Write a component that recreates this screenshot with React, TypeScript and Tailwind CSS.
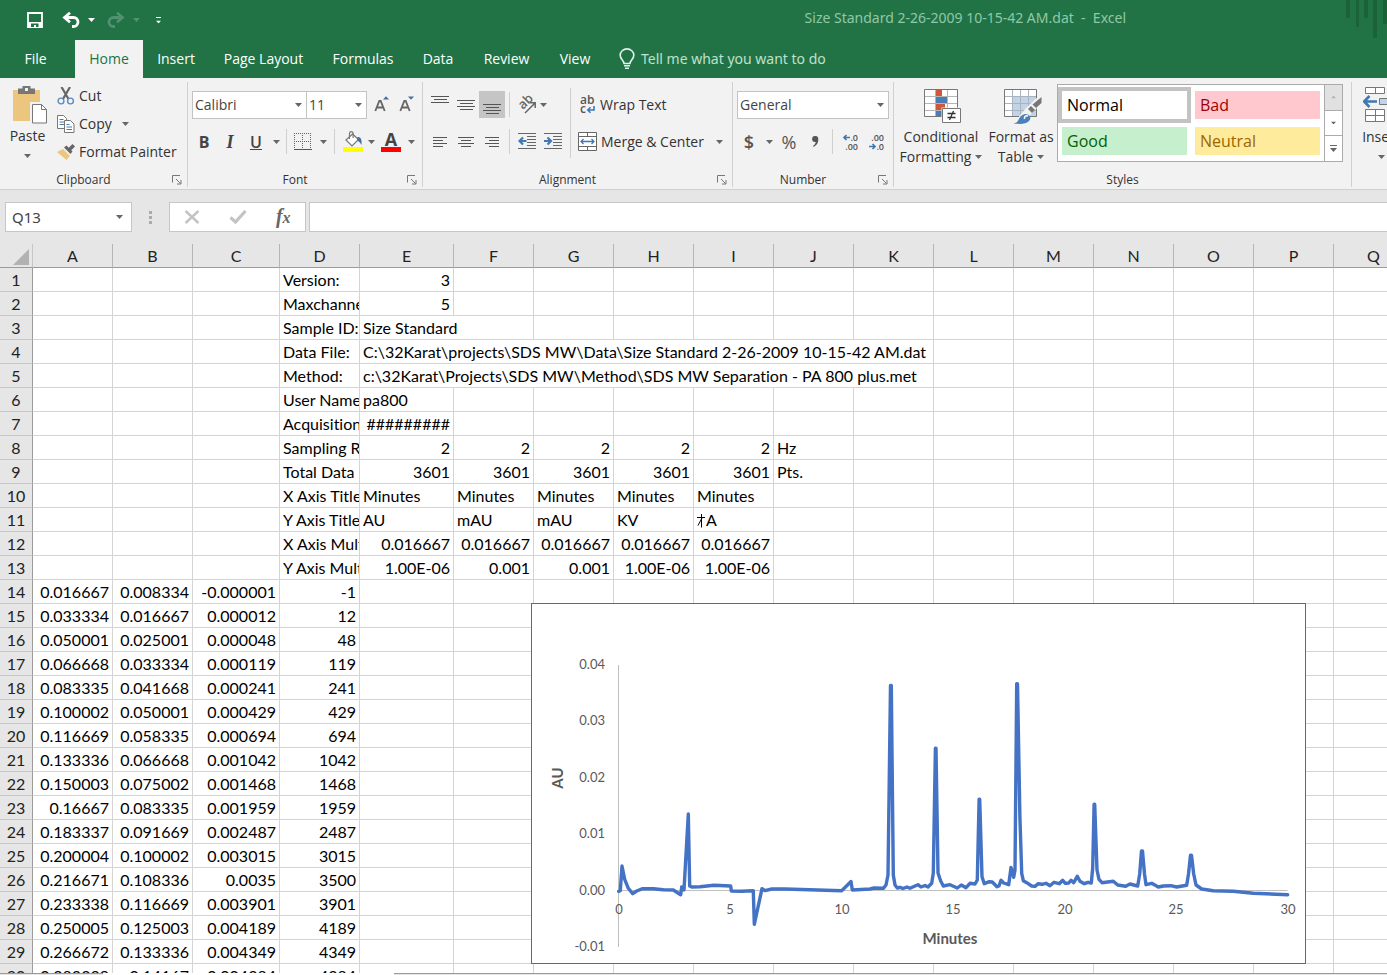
import React from "react";

type IconProps = { className?: string };

const Caret = ({ className = "text-[#666]" }: IconProps) => (
  <svg width="7" height="4" viewBox="0 0 7 4" className={`shrink-0 ${className}`} aria-hidden="true">
    <path d="M0 0h7L3.5 4z" fill="currentColor" />
  </svg>
);

const SaveIcon = () => (
  <svg width="16" height="16" viewBox="0 0 16 16" aria-hidden="true">
    <path d="M1 1h14v14H1z" fill="none" stroke="#fff" strokeWidth="1.8" />
    <path d="M1 10h14v5H1z" fill="#fff" />
    <path d="M4 11.500h7.500V15H9v-2H7v2H4z" fill="#217346" />
  </svg>
);

const ArrowBack = ({ className = "" }: IconProps) => (
  <svg width="19" height="16" viewBox="0 0 19 16" className={className} aria-hidden="true">
    <path d="M3 5.500h8.500a4.500 4.500 0 0 1 0 9H10" fill="none" stroke="currentColor" strokeWidth="2.800" />
    <path d="M8 .8 2.500 5.500l5.500 4.700" fill="none" stroke="currentColor" strokeWidth="2.800" />
  </svg>
);

const BulbIcon = () => (
  <svg width="16" height="22" viewBox="0 0 16 22" fill="none" stroke="#e3f1e8" strokeWidth="1.600" aria-hidden="true">
    <path d="M5 15.500c0-3-3.800-4.200-3.800-8.300a6.800 6.300 0 0 1 13.600 0c0 4.100-3.800 5.300-3.800 8.300z" />
    <path d="M5 17.800h6M6 20.300h4" />
  </svg>
);

const PasteIcon = () => (
  <svg width="36" height="40" viewBox="0 0 36 40" aria-hidden="true">
    <path d="M1 4h27v31H1z" fill="#ecc57e" />
    <path d="M6 2.500h4.500V0h8v2.500H23V8H6z" fill="#777" />
    <path d="M13 2h3v3h-3z" fill="#f2f2f2" />
    <path d="M19.500 17.500h10l5 5.500v14.500h-15z" fill="#fff" stroke="#f2f2f2" strokeWidth="3" />
    <path d="M20.500 18.500h9l5 5v13.500h-14z" fill="#fff" stroke="#777" />
    <path d="M29.500 18.500v5h5" fill="none" stroke="#777" />
  </svg>
);

const CutIcon = () => (
  <svg width="18" height="18" viewBox="0 0 18 18" fill="none" aria-hidden="true">
    <path d="M4.500 0 11.500 12M13 0 6 12" stroke="#666" strokeWidth="2.200" />
    <circle cx="4" cy="14" r="2.900" stroke="#5b8ac0" strokeWidth="1.400" />
    <circle cx="13.500" cy="14" r="2.900" stroke="#5b8ac0" strokeWidth="1.400" />
  </svg>
);

const CopyIcon = () => (
  <svg width="18" height="18" viewBox="0 0 18 18" fill="#fff" aria-hidden="true">
    <path d="M.5.500h6l3 3v10h-9z" stroke="#777" />
    <path d="M2.500 4.500h4M2.500 7h5M2.500 9.500h5" stroke="#4a7db5" />
    <path d="M7.500 5.500h6l3.500 3.500v8.500H7.500z" stroke="#777" />
    <path d="M9.500 9.500h3M9.500 12h5.500M9.500 14.500h5.500" stroke="#4a7db5" />
  </svg>
);

const PainterIcon = () => (
  <svg width="18" height="16" viewBox="0 0 18 16" aria-hidden="true">
    <path d="M0 8 6 5l7 7-3.500 4z" fill="#ecc57e" />
    <path d="M7 3.500 9.500 1.500l6 6-2 2.500z" fill="#666" />
    <path d="M11 4.500 15.500 0 18 2.500 13.500 7z" fill="#666" />
  </svg>
);

const Launcher = () => (
  <svg width="10" height="10" viewBox="0 0 10 10" fill="none" stroke="#777" aria-hidden="true">
    <path d="M.5 7.500V.5h7.500M4 4l4.500 4.500M9 5v4H5" />
  </svg>
);

const GrowFont = ({ down = false }: { down?: boolean }) => (
  <svg width="16" height="18" viewBox="0 0 16 18" aria-hidden="true">
    <path d="M1.300 15 5.300 5h1.400l4 10M2.800 11.500h6.500" fill="none" stroke="#666" strokeWidth="1.800" />
    {down ? <path d="M9 0.500h6l-3 3.200z" fill="#41719c" /> : <path d="M9 3.500h6L12 .3z" fill="#41719c" />}
  </svg>
);

const BordersIcon = () => (
  <svg width="18" height="18" viewBox="0 0 18 18" fill="none" stroke="#666" shapeRendering="crispEdges" aria-hidden="true">
    <path d="M0 .5h18M0 8.500h18M.5 0v17M8.500 0v17M16.500 0v17" strokeDasharray="1 1" />
    <path d="M0 16.500h18" stroke="#555" />
  </svg>
);

const FillIcon = () => (
  <svg width="20" height="21" viewBox="0 0 20 21" aria-hidden="true">
    <path d="M9.500 3 15.500 8.500 9 15 3 9z" fill="#fff" stroke="#777" strokeWidth="1.200" />
    <path d="M6.500 8V2.500a1.800 1.800 0 0 1 3.600 0V7" fill="none" stroke="#777" strokeWidth="1.200" />
    <path d="M14.500 6c3.500 0 4.500 2.500 4 8-1.200-2-2.500-3.500-4.500-5z" fill="#41719c" />
    <path d="M0 16h20v5H0z" fill="#ff0" />
  </svg>
);

const Lines = ({ rows }: { rows: [number, number, number][] }) => (
  <svg width="18" height="22" viewBox="0 0 18 22" aria-hidden="true">
    {rows.map(([x, y, w]) => (
      <rect key={y} x={x} y={y} width={w} height="1" fill="#555" />
    ))}
  </svg>
);

const IndentIcon = ({ right = false }: { right?: boolean }) => (
  <svg width="18" height="17" viewBox="0 0 18 17" aria-hidden="true">
    <path d="M0 .5h18M9 3.500h9M9 6.500h9M9 9.500h9M9 12.500h9M0 15.500h18" stroke="#666" />
    {right ? (
      <path d="M0 8h7M3.500 4.500 7 8l-3.500 3.500" fill="none" stroke="#3f78b5" strokeWidth="2.200" />
    ) : (
      <path d="M1.500 8h7M5 4.500 1.500 8 5 11.500" fill="none" stroke="#3f78b5" strokeWidth="2.200" />
    )}
  </svg>
);

const OrientationIcon = () => (
  <svg width="20" height="18" viewBox="0 0 20 18" className="overflow-visible" aria-hidden="true">
    <text fontSize="13" fontWeight="600" fill="#666" transform="translate(6 14) rotate(-45)" className="font-['Open_Sans',sans-serif]">
      ab
    </text>
    <path d="M8 17 18 7M13 6.800h5.200V12" fill="none" stroke="#666" strokeWidth="1.500" />
  </svg>
);

const WrapIcon = () => (
  <svg width="18" height="20" viewBox="0 0 18 20" aria-hidden="true">
    <text x="2" y="9" fontSize="12" fontWeight="600" fill="#555" className="font-['Open_Sans',sans-serif]">ab</text>
    <text x="2" y="18" fontSize="12" fontWeight="600" fill="#555" className="font-['Open_Sans',sans-serif]">c</text>
    <path d="M16 11v4h-6M12.500 12.300 9.800 15l2.700 2.700" fill="none" stroke="#3f78b5" strokeWidth="1.600" />
  </svg>
);

const MergeIcon = () => (
  <svg width="19" height="19" viewBox="0 0 19 19" fill="none" aria-hidden="true">
    <path d="M.5.500h18v18H.5z" fill="#fff" stroke="#666" />
    <path d="M.5 4.500h18M.5 14.500h18M9.500.500v4M9.500 14.500v4" stroke="#666" />
    <path d="M3 9.500h13M5.500 7 3 9.500 5.500 12M13.500 7 16 9.500 13.500 12" stroke="#3f78b5" strokeWidth="1.300" />
  </svg>
);

const DecimalIcon = ({ decrease = false }: { decrease?: boolean }) => (
  <svg width="18" height="18" viewBox="0 0 18 18" aria-hidden="true" className="font-['Open_Sans',sans-serif]">
    <g fontSize="9" fontWeight="600" fill="#555" textAnchor="end">
      <text x="16" y="8">{decrease ? ".00" : ".0"}</text>
      <text x="16" y="17">{decrease ? ".0" : ".00"}</text>
    </g>
    {decrease ? (
      <path d="M1 13.500h6M4.500 11 7 13.500 4.500 16" fill="none" stroke="#3f78b5" strokeWidth="1.700" />
    ) : (
      <path d="M2 4.500h6M4.500 2 2 4.500 4.500 7" fill="none" stroke="#3f78b5" strokeWidth="1.700" />
    )}
  </svg>
);

const ConditionalIcon = () => (
  <svg width="38" height="36" viewBox="0 0 38 36" className="ml-1" aria-hidden="true">
    <path d="M1 1h33v27H1z" fill="#fff" />
    <path d="M12 1h6v7h-6zM12 15h9v6h-9z" fill="#d0573a" />
    <path d="M12 8h11v7H12zM12 21h6v7h-6z" fill="#4a7db5" />
    <path d="M1 7.500h33M1 14.500h33M1 21.500h33M11.500 1v27M23.500 1v27" stroke="#b5b5b5" fill="none" />
    <path d="M.5.500h33v27h-33z" fill="none" stroke="#777" />
    <path d="M17.500 18.500h20V36h-20z" fill="#f2f2f2" />
    <path d="M18.500 19.500h18v14h-18z" fill="#fff" stroke="#777" />
    <path d="M23.500 24.500h8M23.500 28.500h8M29.500 22 25.500 31" stroke="#333" fill="none" strokeWidth="1.300" />
  </svg>
);

const FormatTableIcon = () => (
  <svg width="38" height="36" viewBox="0 0 38 36" className="ml-1" aria-hidden="true">
    <path d="M1 1h32v27H1z" fill="#fff" />
    <path d="M9 8h24v20H9z" fill="#c2d3e8" />
    <path d="M1 7.500h32M1 14.500h32M1 21.500h32M8.500 1v27M16.500 1v27M24.500 1v27" stroke="#a9b4c0" fill="none" />
    <path d="M.5.500h32v27H.5z" fill="none" stroke="#777" />
    <path d="M22 19 36 6h2v8L26 26 17 36H8z" fill="#f2f2f2" />
    <path d="M37.500 8v6l-5.500 5-3.500-3.500z" fill="#777" />
    <path d="m27 17 4 4-3 3-4-4z" fill="#777" />
    <path d="M9.500 34.500c5-1 4.500-4 7-7 3-3.500 7.500-3.500 9.500 0 1 2.500-.5 5-4 6.500-4 1.200-8 1-12.500.500z" fill="#4a80bb" />
    <path d="M20.500 30c-.5-2.500 1-3.500 3.500-3" fill="none" stroke="#fff" strokeWidth="1.500" />
  </svg>
);

const InsertCellsIcon = () => (
  <svg width="36" height="36" viewBox="0 0 36 36" fill="#fff" aria-hidden="true">
    <path d="M2.500.500h19v6h-19zM12.500.500v6M2.500 22.500h19v12h-19zM12.500 22.500v12M2.500 28.500h19" stroke="#777" />
    <path d="M16.500 11.500h19v6h-19z" fill="#c2d3e8" stroke="#777" />
    <path d="M1.500 14.500H14M6.500 9 1 14.500 6.500 20" fill="none" stroke="#3f78b5" strokeWidth="2.600" />
  </svg>
);

const Divider = ({ className = "h-[25px]" }: IconProps) => <span className={`w-px shrink-0 bg-[#d0d0d0] ${className}`} />;

const ToolButton = ({ label, className = "w-[26px]", children }: { label: string; className?: string; children: React.ReactNode }) => (
  <button type="button" aria-label={label} className={`flex h-[27px] shrink-0 items-center justify-center ${className}`}>
    {children}
  </button>
);

const Dropdown = ({ label, value, className }: { label: string; value: string; className: string }) => (
  <span className={`relative flex h-7 shrink-0 items-center border border-[#c3c3c3] bg-white ${className}`}>
    <select aria-label={label} defaultValue={value} className="h-full w-full appearance-none bg-transparent pl-[2px] text-sm text-[#444] outline-none">
      <option>{value}</option>
    </select>
    <span className="pointer-events-none absolute right-1">
      <Caret />
    </span>
  </span>
);

const Group = ({ name, launcher = true, className = "", children }: { name: string; launcher?: boolean; className?: string; children: React.ReactNode }) => (
  <section aria-label={name} className={`flex h-[105px] shrink-0 flex-col border-r border-[#d0d0d0] ${className}`}>
    <div className="flex-1">{children}</div>
    <div className="flex h-[14px] items-center text-xs leading-[14px] text-[#333]">
      <span className="flex-1 text-center">{name}</span>
      {launcher && (
        <button type="button" aria-label={`${name} settings`} className="mr-[5px] flex h-[14px] w-[15px] items-center justify-end">
          <Launcher />
        </button>
      )}
    </div>
  </section>
);

const tabs: [string, string][] = [
  ["File", "w-[71px] mr-1"],
  ["Home", "w-[68px] bg-[#f2f2f2] text-[#217346]"],
  ["Insert", "w-[66px]"],
  ["Page Layout", "w-[109px]"],
  ["Formulas", "w-[90px]"],
  ["Data", "w-[60px]"],
  ["Review", "w-[77px]"],
  ["View", "w-[60px]"],
];

const TitleBar = () => (
  <header className="shrink-0 bg-[#217346] text-white">
    <div className="relative flex h-10 items-center">
      <div className="flex h-9 items-center pl-[27px]">
        <button type="button" aria-label="Save"><SaveIcon /></button>
        <button type="button" aria-label="Undo" className="ml-[19px] flex items-center gap-[7px]">
          <ArrowBack />
          <Caret className="text-white" />
        </button>
        <button type="button" aria-label="Redo" className="ml-[11px] flex items-center gap-2 text-[#4f9170]">
          <ArrowBack className="-scale-x-100" />
          <Caret className="text-[#4f9170]" />
        </button>
        <button type="button" aria-label="Customize toolbar" className="ml-[15px] flex flex-col items-center gap-[2px]">
          <span className="h-px w-[5px] bg-white" />
          <Caret className="scale-75 text-white" />
        </button>
      </div>
      <h1 className="mr-[261px] mb-1 ml-auto font-['Noto_Sans',sans-serif] text-sm leading-8 whitespace-pre text-[#90c8a6]">Size Standard 2-26-2009 10-15-42 AM.dat  -  Excel</h1>
      <svg width="42" height="40" viewBox="0 0 42 40" fill="#1c6238" className="absolute top-0 right-0" aria-hidden="true">
        <path d="M1 0h4v18H1zM11 0h3v27h-3zM19 0h4v18h-4zM28 0h4v38h-4zM38 0h4v24h-4z" />
      </svg>
    </div>
    <nav className="flex h-[38px] text-sm">
      {tabs.map(([t, cls]) => (
        <button key={t} type="button" className={`shrink-0 ${cls}`}>{t}</button>
      ))}
      <button type="button" className="ml-[14px] flex items-center gap-[6px] font-['Noto_Sans',sans-serif] text-[#bfe0cc]">
        <BulbIcon />
        Tell me what you want to do
      </button>
    </nav>
  </header>
);

const styleCards: [string, string][] = [
  ["Normal", "border-4 border-[#c3c3c3] bg-white text-black"],
  ["Bad", "border-4 border-white bg-[#ffc7ce] bg-clip-padding text-[#9c0006]"],
  ["Good", "border-4 border-white bg-[#c6efce] bg-clip-padding text-[#006100]"],
  ["Neutral", "border-4 border-white bg-[#ffeb9c] bg-clip-padding text-[#9c6500]"],
];

const Ribbon = () => (
  <div className="flex h-28 shrink-0 overflow-hidden border-b border-[#d0d0d0] bg-[#f2f2f2] pt-1 text-sm text-[#333]">
    <Group name="Clipboard" className="w-[188px]">
      <div className="flex">
        <button type="button" className="flex w-[55px] flex-col items-center pt-1">
          <span className="pl-1"><PasteIcon /></span>
          <span className="leading-5">Paste</span>
          <span className="pt-2"><Caret /></span>
        </button>
        <div className="flex flex-col items-start pl-[2px]">
          <button type="button" className="flex h-7 items-center gap-1"><CutIcon />Cut</button>
          <button type="button" className="flex h-7 items-center gap-1"><CopyIcon />Copy<span className="pl-[6px]"><Caret /></span></button>
          <button type="button" className="flex h-7 items-center gap-1"><PainterIcon />Format Painter</button>
        </div>
      </div>
    </Group>

    <Group name="Font" className="w-[235px]">
      <div className="flex items-center pt-[9px] pl-1">
        <Dropdown label="Font name" value="Calibri" className="w-[115px]" />
        <Dropdown label="Font size" value="11" className="-ml-px w-[61px]" />
        <ToolButton label="Increase font size" className="ml-[3px] w-6"><GrowFont /></ToolButton>
        <ToolButton label="Decrease font size" className="w-[26px]"><GrowFont down /></ToolButton>
      </div>
      <div className="flex items-center pt-[9px] pl-1 text-base text-[#444]">
        <ToolButton label="Bold" className="w-6"><b>B</b></ToolButton>
        <ToolButton label="Italic" className="w-7"><span className="font-['Liberation_Serif',serif] text-lg font-bold italic">I</span></ToolButton>
        <ToolButton label="Underline" className="w-6"><span className="font-semibold underline">U</span></ToolButton>
        <ToolButton label="Underline options" className="w-4"><Caret /></ToolButton>
        <Divider className="mx-[2px] h-[25px]" />
        <ToolButton label="Borders" className="w-7"><BordersIcon /></ToolButton>
        <ToolButton label="Border options" className="w-3"><Caret /></ToolButton>
        <Divider className="mr-1 ml-[5px] h-[25px]" />
        <ToolButton label="Fill color" className="w-7"><FillIcon /></ToolButton>
        <ToolButton label="Fill options" className="w-2"><Caret /></ToolButton>
        <ToolButton label="Font color" className="w-8">
          <span className="flex h-[21px] w-5 items-center justify-center border-b-5 border-[#f00] text-lg leading-4 font-bold">A</span>
        </ToolButton>
        <ToolButton label="Font color options" className="w-2"><Caret /></ToolButton>
      </div>
    </Group>

    <Group name="Alignment" className="w-[310px]">
      <div className="flex">
        <div className="pl-1">
          <div className="flex items-center pt-[9px]">
            <ToolButton label="Top align"><Lines rows={[[0, 2, 18], [3, 5, 13], [0, 8, 18]]} /></ToolButton>
            <ToolButton label="Middle align"><Lines rows={[[0, 6, 18], [3, 9, 13], [0, 12, 18], [3, 15, 13]]} /></ToolButton>
            <ToolButton label="Bottom align" className="w-[26px] bg-[#c5c5c5]"><Lines rows={[[0, 10, 18], [3, 13, 13], [0, 16, 18], [3, 19, 13]]} /></ToolButton>
            <Divider className="mx-1 h-[25px]" />
            <ToolButton label="Orientation"><OrientationIcon /></ToolButton>
            <Caret />
          </div>
          <div className="flex items-center pt-[10px]">
            <ToolButton label="Align left"><Lines rows={[[2, 6, 14], [2, 9, 10], [2, 12, 14], [2, 15, 10]]} /></ToolButton>
            <ToolButton label="Center"><Lines rows={[[1, 6, 16], [4, 9, 10], [1, 12, 16], [4, 15, 10]]} /></ToolButton>
            <ToolButton label="Align right"><Lines rows={[[2, 6, 14], [6, 9, 10], [2, 12, 14], [6, 15, 10]]} /></ToolButton>
            <Divider className="mx-1 h-[25px]" />
            <ToolButton label="Decrease indent"><IndentIcon /></ToolButton>
            <ToolButton label="Increase indent"><IndentIcon right /></ToolButton>
          </div>
        </div>
        <Divider className="mt-[6px] ml-1 h-[70px]" />
        <div className="pl-[7px]">
          <button type="button" className="mt-[9px] flex h-[27px] items-center gap-1"><WrapIcon />Wrap Text</button>
          <button type="button" className="mt-[10px] flex h-[27px] items-center gap-1"><MergeIcon />Merge &amp; Center<span className="pl-2"><Caret /></span></button>
        </div>
      </div>
    </Group>

    <Group name="Number" className="w-[161px]">
      <div className="pt-[9px] pl-1"><Dropdown label="Number format" value="General" className="w-[152px]" /></div>
      <div className="flex items-center pt-[9px] pl-1 text-lg text-[#555]">
        <ToolButton label="Currency" className="w-6"><span className="font-semibold">$</span></ToolButton>
        <ToolButton label="Currency options" className="w-4"><Caret /></ToolButton>
        <ToolButton label="Percent" className="w-6">%</ToolButton>
        <ToolButton label="Comma style" className="w-7">
          <svg width="7" height="11" viewBox="0 0 7 11" aria-hidden="true"><path d="M3.200 0A3 3 0 0 0 3 6h.8C3.600 7.500 2.500 9 1 10l.5 1C5 9.500 6.500 6.500 6.300 3A3 3 0 0 0 3.200 0z" fill="#555" /></svg>
        </ToolButton>
        <Divider className="mr-[5px] ml-[3px] h-[25px]" />
        <ToolButton label="Increase decimal"><DecimalIcon /></ToolButton>
        <ToolButton label="Decrease decimal"><DecimalIcon decrease /></ToolButton>
      </div>
    </Group>

    <Group name="Styles" launcher={false} className="w-[458px]">
      <div className="flex">
        <button type="button" className="flex w-[94px] flex-col items-center pt-[7px] leading-5">
          <ConditionalIcon />
          <span className="pt-[2px]">Conditional</span>
          <span className="flex items-center gap-1">Formatting <Caret /></span>
        </button>
        <button type="button" className="flex w-[66px] flex-col items-center pt-[7px] leading-5 whitespace-nowrap">
          <FormatTableIcon />
          <span className="pt-[2px]">Format as</span>
          <span className="flex items-center gap-1">Table <Caret /></span>
        </button>
        <div className="mt-[2px] ml-[3px] flex h-[78px] border border-[#ababab] bg-white">
          <div className="grid grid-cols-2 content-center">
            {styleCards.map(([n, cls]) => (
              <button key={n} type="button" className={`h-9 w-[133px] pl-[5px] text-left text-base ${cls}`}>{n}</button>
            ))}
          </div>
          <div className="flex w-[18px] flex-col divide-y divide-[#ababab] border-l border-[#ababab]">
            <button type="button" aria-label="Scroll up" className="flex flex-1 items-center justify-center bg-[#e1e1e1]"><Caret className="scale-75 -scale-y-75 text-[#b5b5b5]" /></button>
            <button type="button" aria-label="Scroll down" className="flex flex-1 items-center justify-center"><Caret className="scale-75 text-[#666]" /></button>
            <button type="button" aria-label="More styles" className="flex flex-1 flex-col items-center justify-center gap-[2px]">
              <span className="h-px w-[7px] bg-[#666]" />
              <Caret />
            </button>
          </div>
        </div>
      </div>
    </Group>

    <Group name="Cells" launcher={false} className="w-[200px]">
      <button type="button" className="flex w-[58px] flex-col items-center pt-[5px] leading-5">
        <InsertCellsIcon />
        <span className="pt-1">Insert</span>
        <span className="pt-2"><Caret /></span>
      </button>
    </Group>
  </div>
);

const FormulaBar = () => (
  <div className="flex shrink-0 bg-[#e6e6e6] pt-3 pb-3 pl-[5px]">
    <label className="relative flex h-[30px] w-[127px] items-center border border-[#c6c6c6] bg-white">
      <input aria-label="Name box" defaultValue="Q13" className="w-full bg-transparent pl-[6px] font-['Noto_Sans',sans-serif] text-[15px] text-[#444] outline-none" />
      <span className="absolute right-2"><Caret /></span>
    </label>
    <div className="flex w-[37px] flex-col items-center justify-center gap-[2px]">
      <i className="size-[3px] bg-[#ababab]" />
      <i className="size-[3px] bg-[#ababab]" />
      <i className="size-[3px] bg-[#ababab]" />
    </div>
    <div className="flex h-[30px] w-[137px] items-center justify-around border border-[#c6c6c6] bg-white">
      <button type="button" aria-label="Cancel">
        <svg width="16" height="14" viewBox="0 0 16 14" aria-hidden="true"><path d="M1.500 1 14.500 13M14.500 1 1.500 13" stroke="#c3c3c3" strokeWidth="2.400" /></svg>
      </button>
      <button type="button" aria-label="Enter">
        <svg width="18" height="14" viewBox="0 0 18 14" aria-hidden="true"><path d="m1.500 7.500 5 4.500L16.500 1" fill="none" stroke="#c3c3c3" strokeWidth="3.200" /></svg>
      </button>
      <button type="button" aria-label="Insert function" className="font-['Liberation_Serif',serif] text-xl leading-6 font-bold text-[#666] italic">
        f<span className="text-base">x</span>
      </button>
    </div>
    <input aria-label="Formula" className="ml-[3px] h-[30px] min-w-0 flex-1 border border-r-0 border-[#c6c6c6] bg-white px-2 text-sm outline-none" />
  </div>
);

const columns = "ABCDEFGHIJKLMNOPQ".split("");
const columnWidths = [80, 80, 87, 80, 94, 80, 80, 80, 80, 80, 80, 80, 80, 80, 80, 80, 80];

type Cell = { at: number; text: React.ReactNode; num?: boolean; span?: number };
const label = (text: string): Cell => ({ at: 3, text });
const run = (values: string[], num: boolean): Cell[] => values.map((text, i) => ({ at: 4 + i, text, num }));

const CursorMark = () => (
  <svg width="9" height="16" viewBox="0 0 9 16" className="inline-block align-[-3px]" fill="none" stroke="#000" aria-hidden="true">
    <path d="M0 4.500h8M4.500 1v13.500M5 5 1 12.500" />
  </svg>
);

const headRows: Cell[][] = [
  [label("Version:"), { at: 4, text: "3", num: true }],
  [label("Maxchannels:"), { at: 4, text: "5", num: true }],
  [label("Sample ID:"), { at: 4, text: "Size Standard", span: 2 }],
  [label("Data File:"), { at: 4, text: "C:\\32Karat\\projects\\SDS MW\\Data\\Size Standard 2-26-2009 10-15-42 AM.dat", span: 7 }],
  [label("Method:"), { at: 4, text: "c:\\32Karat\\Projects\\SDS MW\\Method\\SDS MW Separation - PA 800 plus.met", span: 7 }],
  [label("User Name:"), { at: 4, text: "pa800" }],
  [label("Acquisition Date"), { at: 4, text: "#########", num: true }],
  [label("Sampling Rate:"), ...run(["2", "2", "2", "2", "2"], true), { at: 9, text: "Hz" }],
  [label("Total Data Points"), ...run(["3601", "3601", "3601", "3601", "3601"], true), { at: 9, text: "Pts." }],
  [label("X Axis Title:"), ...run(["Minutes", "Minutes", "Minutes", "Minutes", "Minutes"], false)],
  [label("Y Axis Title:"), ...run(["AU", "mAU", "mAU", "KV"], false), { at: 8, text: <><CursorMark />A</> }],
  [label("X Axis Multiplier"), ...run(["0.016667", "0.016667", "0.016667", "0.016667", "0.016667"], true)],
  [label("Y Axis Multiplier"), ...run(["1.00E-06", "0.001", "0.001", "1.00E-06", "1.00E-06"], true)],
];

const dataRows = [
  ["0.016667", "0.008334", "-0.000001", "-1"],
  ["0.033334", "0.016667", "0.000012", "12"],
  ["0.050001", "0.025001", "0.000048", "48"],
  ["0.066668", "0.033334", "0.000119", "119"],
  ["0.083335", "0.041668", "0.000241", "241"],
  ["0.100002", "0.050001", "0.000429", "429"],
  ["0.116669", "0.058335", "0.000694", "694"],
  ["0.133336", "0.066668", "0.001042", "1042"],
  ["0.150003", "0.075002", "0.001468", "1468"],
  ["0.16667", "0.083335", "0.001959", "1959"],
  ["0.183337", "0.091669", "0.002487", "2487"],
  ["0.200004", "0.100002", "0.003015", "3015"],
  ["0.216671", "0.108336", "0.0035", "3500"],
  ["0.233338", "0.116669", "0.003901", "3901"],
  ["0.250005", "0.125003", "0.004189", "4189"],
  ["0.266672", "0.133336", "0.004349", "4349"],
  ["0.283339", "0.14167", "0.004384", "4384"],
].map((values) => values.map((text, at): Cell => ({ at, text, num: true })));

const rows = [...headRows, ...dataRows];

const GridRow = ({ index, cells }: { index: number; cells: Cell[] }) => {
  const out: React.ReactNode[] = [];
  for (let c = 0; c < columns.length; ) {
    const cell = cells.find((x) => x.at === c);
    const span = cell?.span ?? 1;
    out.push(
      <td key={c} colSpan={span} className={`overflow-hidden border-r border-b border-[#d4d4d4] p-0 px-[3px] whitespace-nowrap ${cell?.num ? "text-right" : "text-left"}`}>
        {cell?.text}
      </td>
    );
    c += span;
  }
  return (
    <tr className="h-6">
      <th scope="row" className="border-r border-b border-r-[#9b9b9b] border-b-[#c6c6c6] bg-[#e6e6e6] p-0 font-normal text-[#222]">{index}</th>
      {out}
    </tr>
  );
};

const trace: [number, number][] = [
  [87.7, 288.3], [89.3, 287.7], [91, 263], [93.7, 276.3], [97.3, 285.3], [101.7, 290.7], [105.7, 288], [111.7, 285.7], [122.3, 285.7],
  [132.3, 286.7], [142.3, 287], [149.7, 291.7], [150.7, 284], [153, 287], [157.3, 211], [158.7, 283], [160.7, 284], [169, 283.7],
  [183, 282.3], [199.7, 283], [200.3, 288], [210.7, 288.3], [222.3, 287.7], [223.3, 321.3], [231, 285.7], [234, 287.7], [240.7, 286],
  [254, 286], [310.7, 287.7], [320, 278.5], [321.3, 287], [339, 286], [343, 285], [352.3, 285.3], [355, 282], [357, 272], [359.5, 82.5],
  [360.3, 82.5], [362.3, 272], [364, 282], [366.3, 285], [369, 284.3], [372, 285.5], [376, 284], [379, 285.3], [384, 283], [387, 281.7], [390, 284], [394, 282.5],
  [397, 284], [400.7, 280.3], [402.3, 270], [404.4, 145.3], [405, 145.3], [407, 270], [409.7, 278], [412.3, 283], [419, 281.7], [426.3, 285], [430.3, 282],
  [435, 284.7], [439, 280.3], [444, 281], [446.3, 277], [448.1, 196.3], [448.7, 196.3], [451, 273.7], [453.3, 280.7], [458.3, 278.7], [461.3, 279],
  [466, 283.7], [468, 283], [470, 277.3], [472.7, 280], [477.7, 281.7], [480, 264.5], [482.7, 274.3], [484, 267], [485.7, 80.8], [486.5, 80.8], [488.9, 213.7],
  [490.7, 270.3], [492.3, 277.7], [495.7, 279.7], [500.7, 283], [504, 283.3], [507.3, 280.7], [511, 281.3], [515, 280.3], [519, 282.7],
  [523, 279.3], [528.3, 280.7], [531.7, 277.3], [534.3, 280.3], [537.7, 280], [540, 277.3], [542.7, 279.7], [546.3, 273.3], [549, 278.3],
  [553.3, 280.7], [557, 279.3], [560.3, 280], [561.7, 265], [563.1, 201.3], [563.7, 201.3], [566, 267], [568, 276.3], [571, 279.7], [582.3, 278.3],
  [586.7, 282], [594.7, 283.3], [599, 281], [606.7, 283], [608.7, 271], [610.5, 248], [611.5, 248], [613.5, 271], [615, 281.7], [620.7, 280.3],
  [627.3, 284], [632.3, 283], [639.7, 282.7], [645.7, 284], [655.7, 282.3], [657.5, 271], [659.5, 252.3], [660.5, 252.3], [662.7, 271], [665, 282],
  [670.7, 286], [682.3, 287.7], [702.3, 288.3], [722.3, 290.3], [756.7, 291.7],
];

const Chart = () => (
  <figure className="absolute top-[359px] left-[531px] border border-[#41719c] bg-white">
    <svg width="773" height="359" viewBox="1 1 773 359" role="img" aria-label="AU over minutes" className="block font-['Lato',sans-serif]" fontSize="13" fill="#595959">
      <path d="M87.500 62v282M87.500 287.500h669" stroke="#bfbfbf" fill="none" />
      {["0.04", "0.03", "0.02", "0.01", "0.00", "-0.01"].map((t, i) => (
        <text key={t} x="74" y={Math.round(66 + i * 56.4)} textAnchor="end">{t}</text>
      ))}
      {["0", "5", "10", "15", "20", "25", "30"].map((t, i) => (
        <text key={t} x={Math.round(87.5 + i * 111.5)} y="311" textAnchor="middle">{t}</text>
      ))}
      <text x="419" y="341" textAnchor="middle" fontSize="15" fontWeight="700">Minutes</text>
      <text transform="translate(32 175) rotate(-90)" textAnchor="middle" fontSize="15" fontWeight="700">AU</text>
      <polyline points={trace.map((p) => p.join(",")).join(" ")} fill="none" stroke="#4472c4" strokeWidth="3.400" strokeLinejoin="round" strokeLinecap="round" />
    </svg>
  </figure>
);

const Sheet = () => (
  <main className="relative min-h-0 flex-1 overflow-hidden bg-white font-['Lato',sans-serif] text-base leading-[23px] text-black [font-variant-ligatures:none]">
    <table className="w-[1414px] table-fixed border-separate border-spacing-0">
      <colgroup>
        <col className="w-[33px]" />
        {columnWidths.map((w, i) => (
          <col key={i} style={{ width: w }} />
        ))}
      </colgroup>
      <thead>
        <tr className="h-6">
          <th className="border-r border-b border-r-[#c6c6c6] border-b-[#9b9b9b] bg-[#e6e6e6] p-0">
            <svg width="16" height="16" viewBox="0 0 16 16" className="mt-[2px] mr-[3px] ml-auto" aria-label="Select all"><path d="M16 0v16H0z" fill="#b2b2b2" /></svg>
          </th>
          {columns.map((c) => (
            <th key={c} scope="col" className="border-r border-b border-r-[#b5b5b5] border-b-[#9b9b9b] bg-[#e6e6e6] p-0 font-normal text-[#222]">{c}</th>
          ))}
        </tr>
      </thead>
      <tbody>
        {rows.map((cells, i) => (
          <GridRow key={i} index={i + 1} cells={cells} />
        ))}
      </tbody>
    </table>
    <Chart />
  </main>
);

export default function App() {
  return (
    <div className="flex h-screen flex-col overflow-hidden bg-[#e6e6e6] font-['Open_Sans',sans-serif]">
      <TitleBar />
      <Ribbon />
      <FormulaBar />
      <Sheet />
      <footer className="flex h-[2px] shrink-0">
        <span className="w-[103px] border-t border-[#9b9b9b]" />
        <span className="w-[291px] bg-white" />
        <span className="flex-1 border-t border-[#9b9b9b]" />
      </footer>
    </div>
  );
}
